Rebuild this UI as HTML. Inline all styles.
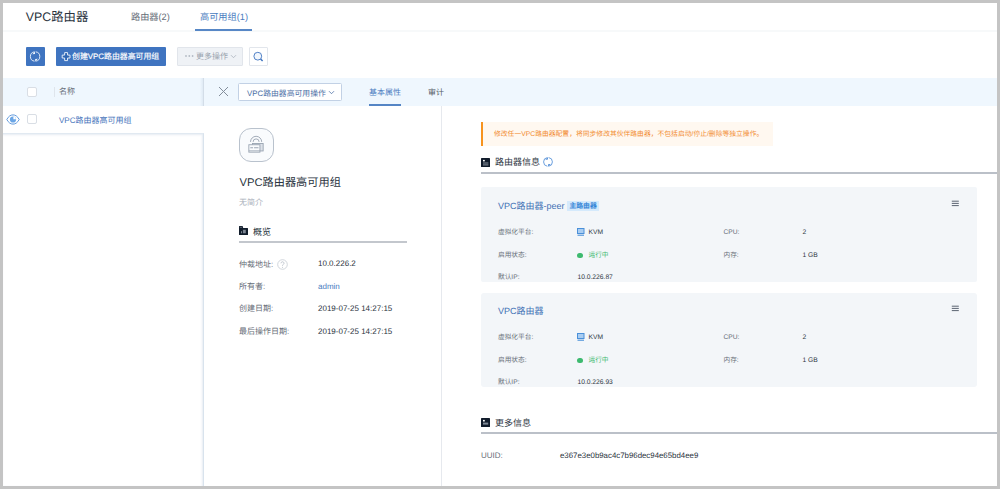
<!DOCTYPE html>
<html lang="zh-CN"><head><meta charset="utf-8">
<style>
*{box-sizing:border-box;margin:0;padding:0}
html,body{width:1000px;height:489px;overflow:hidden;background:#c4c4c4;font-family:"Liberation Sans",sans-serif;}
.pg{position:absolute;left:3px;top:3px;width:994px;height:483px;background:#fff;overflow:hidden}
.a{position:absolute;white-space:nowrap;line-height:1;text-rendering:geometricPrecision}
</style></head><body>
<div class="pg"></div>

<!-- header -->
<div class="a" style="left:25.7px;top:10.8px;font-size:12.4px;color:#2b3440">VPC路由器</div>
<div class="a" style="left:131px;top:12.5px;font-size:9.2px;color:#666d77">路由器(2)</div>
<div class="a" style="left:200px;top:12.5px;font-size:9.2px;color:#4a7cc0">高可用组(1)</div>
<div class="a" style="left:3px;top:30px;width:994px;height:2px;background:#f7f9fa"></div>
<div class="a" style="left:195.3px;top:29.2px;width:56.5px;height:1.8px;background:#5787c6"></div>

<!-- toolbar -->
<div class="a" style="left:26px;top:47px;width:19px;height:19px;background:#3f74c0;border-radius:1px"></div>
<svg class="a" style="left:26px;top:47px" width="19" height="19" viewBox="0 0 19 19"><g transform="translate(4.1 4.8)"><path d="M4.4 9.36A4.7 4.7 0 0 1 4.4 0.04M5.6 0.04A4.7 4.7 0 0 1 5.6 9.36" fill="none" stroke="#f2f6fc" stroke-width="0.9"/><path d="M2.2 2.4L4.9 -0.2 4.9 2.2zM7.8 7L5.1 9.6 5.1 7.2z" fill="#f2f6fc"/></g></svg>
<div class="a" style="left:56px;top:47px;width:110px;height:19px;background:#3f74c0;border-radius:1px"></div>
<svg class="a" style="left:61px;top:52px" width="10" height="10" viewBox="0 0 10 10"><path d="M3.65 0.6H6.55V3.1H9V6H6.55V8.6H3.65V6H1.2V3.1H3.65Z" fill="#2f66b3" stroke="#f4f8fd" stroke-width="0.9" stroke-linejoin="miter"/></svg>
<div class="a" style="left:72px;top:52.8px;font-size:7.9px;color:#fff;-webkit-text-stroke:0.15px #fff">创建VPC路由器高可用组</div>
<div class="a" style="left:177px;top:47px;width:66px;height:19px;background:#eff2f6;border:1px solid #e1e5eb;border-radius:1px"></div>
<svg class="a" style="left:184px;top:54px" width="12" height="4" viewBox="0 0 12 4"><circle cx="2" cy="2" r="0.9" fill="#b4bbc5"/><circle cx="5.3" cy="2" r="0.9" fill="#b4bbc5"/><circle cx="8.6" cy="2" r="0.9" fill="#b4bbc5"/></svg>
<div class="a" style="left:196px;top:53.2px;font-size:8px;color:#9aa3ae">更多操作</div>
<svg class="a" style="left:230px;top:54px" width="7" height="5" viewBox="0 0 7 5"><path d="M1 1.2l2.5 2.5L6 1.2" fill="none" stroke="#a9b1bc" stroke-width="0.8"/></svg>
<div class="a" style="left:249px;top:47px;width:19px;height:19px;background:#fff;border:1px solid #e2e6ec;border-radius:1px"></div>
<svg class="a" style="left:249px;top:47px" width="19" height="19" viewBox="0 0 19 19"><circle cx="8.8" cy="9.2" r="3.9" fill="#f2f7fd" stroke="#3f74c0" stroke-width="0.9"/><path d="M11.6 11.9l2 2.1" stroke="#3f74c0" stroke-width="1.5"/></svg>

<!-- table header -->
<div class="a" style="left:3px;top:78px;width:994px;height:28px;background:#eff7fe"></div>
<div class="a" style="left:27px;top:87px;width:10.2px;height:10.2px;background:#fff;border:1px solid #d9dee5;border-radius:2px"></div>
<div class="a" style="left:53.5px;top:87px;width:1px;height:10px;background:#dfe5ec"></div>
<div class="a" style="left:59px;top:88px;font-size:8px;color:#666d77">名称</div>
<div class="a" style="left:200px;top:78px;width:4px;height:28px;background:linear-gradient(to right,rgba(200,215,230,0),rgba(200,215,230,.4) 75%,#d3dde8 75%)"></div>

<!-- row 1 -->
<svg class="a" style="left:5.5px;top:113.5px" width="14" height="11" viewBox="0 0 14 11"><path d="M0.8 5.5C2.6 2.2 4.6 0.9 7 0.9S11.4 2.2 13.2 5.5C11.4 8.8 9.4 10.1 7 10.1S2.6 8.8 0.8 5.5z" fill="#fff" stroke="#5a95db" stroke-width="0.95"/><circle cx="7" cy="5.5" r="3.1" fill="#6ba6e6"/><path d="M7.4 2.5v2.7h2.7A3.1 3.1 0 0 0 7.4 2.5z" fill="#fff"/></svg>
<div class="a" style="left:27.1px;top:114.2px;width:10.2px;height:10.2px;background:#fff;border:1px solid #d9dee5;border-radius:2px"></div>
<div class="a" style="left:59px;top:116.5px;font-size:8px;color:#4574bb">VPC路由器高可用组</div>
<div class="a" style="left:3px;top:133px;width:201px;height:353px;border-top:1px solid #e1e9f1;border-right:1px solid #d9e3ed;box-shadow:inset -1px 1px 2px rgba(205,218,232,.5)"></div>

<!-- detail header -->
<svg class="a" style="left:218px;top:86px" width="11" height="11" viewBox="0 0 11 11"><path d="M1 1l9 9M10 1l-9 9" stroke="#838d9a" stroke-width="1"/></svg>
<div class="a" style="left:238px;top:83px;width:104px;height:18px;background:#fff;border:1px solid #c2d1e5;border-radius:1.5px"></div>
<div class="a" style="left:247px;top:89.9px;font-size:7.85px;color:#4a6ea5">VPC路由器高可用操作</div>
<svg class="a" style="left:328px;top:90px" width="7" height="5" viewBox="0 0 7 5"><path d="M1 1.2l2.5 2.5L6 1.2" fill="none" stroke="#4a6ea5" stroke-width="0.8"/></svg>
<div class="a" style="left:369px;top:88.5px;font-size:8px;color:#4a7cc0">基本属性</div>
<div class="a" style="left:369px;top:104px;width:31.5px;height:2px;background:#5585c5"></div>
<div class="a" style="left:428px;top:88.5px;font-size:8px;color:#555c66">审计</div>
<div class="a" style="left:441px;top:106px;width:1px;height:380px;background:#e6e9ee"></div>

<!-- middle column -->
<div class="a" style="left:239px;top:128px;width:35px;height:34px;background:#f9fbfd;border:1px solid #b9c2cd;border-radius:12px"></div>
<svg class="a" style="left:239px;top:128px" width="35" height="34" viewBox="0 0 35 34"><path d="M11.5 13.9A5.6 5.6 0 0 1 22.7 13.9M14.1 13.9A3 3 0 0 1 20.1 13.9" fill="none" stroke="#98a3b1" stroke-width="0.9"/><rect x="13.45" y="15.45" width="10.7" height="7.5" fill="#dde2e9" stroke="#98a3b1" stroke-width="0.9"/><rect x="9.85" y="16.75" width="11.1" height="7.4" fill="#f9fbfd" stroke="#98a3b1" stroke-width="0.9"/><path d="M11.7 19.7h1.9M15.5 19.7h3.6" stroke="#9aa5b3" stroke-width="1.1" stroke-linecap="round"/><path d="M9.85 22.8h11.1" stroke="#98a3b1" stroke-width="0.8"/></svg>
<div class="a" style="left:239.5px;top:177.8px;font-size:11.2px;color:#2b3440">VPC路由器高可用组</div>
<div class="a" style="left:239px;top:198.8px;font-size:8px;color:#a9b0ba">无简介</div>
<svg class="a" style="left:239px;top:226px" width="9" height="9" viewBox="0 0 9 9"><path d="M0 0.5Q0 0 0.5 0H3.6L4.2 2H8.5Q9 2 9 2.5V8.5Q9 9 8.5 9H0.5Q0 9 0 8.5z" fill="#111c2b"/><path d="M0.8 0.8H3.2V1.8H0.8z" fill="#5d6673"/><path d="M2 5.2h1v2H2zM3.9 3.8h2.9v3.4H3.9z" fill="#7d8693"/></svg>
<div class="a" style="left:253px;top:227.5px;font-size:9px;color:#2b3440">概览</div>
<div class="a" style="left:239px;top:241px;width:168px;height:2px;background:#c3c7cd"></div>

<div class="a" style="left:239px;top:260.5px;font-size:8px;color:#666d77">仲裁地址:</div>
<svg class="a" style="left:277px;top:258.7px" width="11" height="11" viewBox="0 0 11 11"><circle cx="5.5" cy="5.5" r="4.8" fill="#fff" stroke="#c5cbd3" stroke-width="0.8"/><path d="M4 4.3a1.5 1.5 0 1 1 2.2 1.3c-.6.3-.7.6-.7 1.2" fill="none" stroke="#b5bcc6" stroke-width="0.8"/><circle cx="5.5" cy="8.3" r="0.5" fill="#b5bcc6"/></svg>
<div class="a" style="left:318px;top:260.4px;font-size:8px;color:#2b3440">10.0.226.2</div>
<div class="a" style="left:239px;top:282.7px;font-size:8px;color:#666d77">所有者:</div>
<div class="a" style="left:318px;top:282.6px;font-size:8px;color:#4a7cc0">admin</div>
<div class="a" style="left:239px;top:305px;font-size:8px;color:#666d77">创建日期:</div>
<div class="a" style="left:318px;top:305.3px;font-size:8px;color:#2b3440">2019-07-25 14:27:15</div>
<div class="a" style="left:239px;top:327.5px;font-size:8px;color:#666d77">最后操作日期:</div>
<div class="a" style="left:318px;top:328px;font-size:8px;color:#2b3440">2019-07-25 14:27:15</div>

<!-- right column -->
<div class="a" style="left:481px;top:122px;width:292px;height:24px;background:#fff8f0;border-left:2px solid #f7931e"></div>
<div class="a" style="left:494px;top:132px;font-size:6.8px;color:#f28c30">修改任一VPC路由器配置，将同步修改其伙伴路由器，不包括启动/停止/删除等独立操作。</div>

<svg class="a" style="left:481px;top:157.5px" width="9" height="9" viewBox="0 0 9 9"><rect width="9" height="9" rx="0.6" fill="#111c2b"/><rect x="2" y="1.9" width="1.8" height="1.5" fill="#fff"/><path d="M2 5h5.4M2 6.9h5.4" stroke="#9aa2ad" stroke-width="0.9"/></svg>
<div class="a" style="left:495px;top:158.3px;font-size:9px;color:#2b3440">路由器信息</div>
<svg class="a" style="left:543px;top:156.7px" width="10" height="10" viewBox="0 -0.5 10 10"><path d="M4.4 8.76A4.4 4.4 0 0 1 4.4 0.04M5.6 0.04A4.4 4.4 0 0 1 5.6 8.76" fill="none" stroke="#5b95da" stroke-width="0.9"/><path d="M2.2 2.3L4.9 -0.2 4.9 2.1zM7.8 6.5L5.1 9 5.1 6.7z" fill="#4a88d4"/></svg>
<div class="a" style="left:481px;top:172.2px;width:516px;height:1.8px;background:#bbc0c8"></div>

<div class="a" style="left:481px;top:187.0px;width:496px;height:94.5px;background:#f3f6f9;border-radius:2px"></div>
<div class="a" style="left:498px;top:202.0px;font-size:9px;color:#4271b5">VPC路由器-peer</div>
<div class="a" style="left:567.3px;top:201px;width:31.5px;height:10px;background:#d5eafc"></div>
<div class="a" style="left:569.5px;top:204.3px;font-size:6.8px;color:#2a7fd6;-webkit-text-stroke:0.2px #2a7fd6">主路由器</div>
<svg class="a" style="left:951px;top:200.0px" width="8" height="7" viewBox="0 0 8 7"><path d="M0.8 1.2h7M0.8 3.4h7M0.8 5.6h7" stroke="#4b5563" stroke-width="0.9"/></svg>
<div class="a" style="left:498px;top:229.5px;font-size:6.7px;color:#666d77">虚拟化平台:</div>
<svg class="a" style="left:576.5px;top:227.5px" width="8" height="8" viewBox="0 0 8 8"><rect x="0.5" y="0.5" width="6.5" height="5" fill="#a9cdf2" stroke="#4a90d9" stroke-width="1"/><path d="M0.5 7.2h6.5" stroke="#4a90d9" stroke-width="1.1"/></svg>
<div class="a" style="left:588.5px;top:229.5px;font-size:6.7px;color:#2b3440">KVM</div>
<div class="a" style="left:723.5px;top:229.5px;font-size:6.7px;color:#666d77">CPU:</div>
<div class="a" style="left:802.5px;top:229.5px;font-size:6.7px;color:#2b3440">2</div>
<div class="a" style="left:498px;top:252.6px;font-size:6.7px;color:#666d77">启用状态:</div>
<div class="a" style="left:577px;top:252.8px;width:5.6px;height:5.6px;border-radius:50%;background:#3dba6f"></div>
<div class="a" style="left:588.5px;top:252.6px;font-size:6.7px;color:#3dba6f">运行中</div>
<div class="a" style="left:723.5px;top:252.6px;font-size:6.7px;color:#666d77">内存:</div>
<div class="a" style="left:802.5px;top:252.6px;font-size:6.7px;color:#2b3440">1 GB</div>
<div class="a" style="left:498px;top:274.5px;font-size:6.7px;color:#666d77">默认IP:</div>
<div class="a" style="left:577.5px;top:274.5px;font-size:6.7px;color:#2b3440">10.0.226.87</div>

<div class="a" style="left:481px;top:293.3px;width:495.8px;height:93.6px;background:#f3f6f9;border-radius:3px"></div>
<div class="a" style="left:498px;top:306.7px;font-size:9px;color:#4271b5">VPC路由器</div>
<svg class="a" style="left:951px;top:305.1px" width="8" height="7" viewBox="0 0 8 7"><path d="M0.8 1.2h7M0.8 3.4h7M0.8 5.6h7" stroke="#4b5563" stroke-width="0.9"/></svg>
<div class="a" style="left:498px;top:334.6px;font-size:6.7px;color:#666d77">虚拟化平台:</div>
<svg class="a" style="left:576.5px;top:332.6px" width="8" height="8" viewBox="0 0 8 8"><rect x="0.5" y="0.5" width="6.5" height="5" fill="#a9cdf2" stroke="#4a90d9" stroke-width="1"/><path d="M0.5 7.2h6.5" stroke="#4a90d9" stroke-width="1.1"/></svg>
<div class="a" style="left:588.5px;top:334.6px;font-size:6.7px;color:#2b3440">KVM</div>
<div class="a" style="left:723.5px;top:334.6px;font-size:6.7px;color:#666d77">CPU:</div>
<div class="a" style="left:802.5px;top:334.6px;font-size:6.7px;color:#2b3440">2</div>
<div class="a" style="left:498px;top:357.7px;font-size:6.7px;color:#666d77">启用状态:</div>
<div class="a" style="left:577px;top:357.9px;width:5.6px;height:5.6px;border-radius:50%;background:#3dba6f"></div>
<div class="a" style="left:588.5px;top:357.7px;font-size:6.7px;color:#3dba6f">运行中</div>
<div class="a" style="left:723.5px;top:357.7px;font-size:6.7px;color:#666d77">内存:</div>
<div class="a" style="left:802.5px;top:357.7px;font-size:6.7px;color:#2b3440">1 GB</div>
<div class="a" style="left:498px;top:379.6px;font-size:6.7px;color:#666d77">默认IP:</div>
<div class="a" style="left:577.5px;top:379.6px;font-size:6.7px;color:#2b3440">10.0.226.93</div>

<svg class="a" style="left:481px;top:418px" width="9" height="9" viewBox="0 0 9 9"><rect width="9" height="9" rx="0.6" fill="#111c2b"/><rect x="2" y="1.9" width="1.8" height="1.6" fill="#fff"/><rect x="2" y="4.6" width="5.2" height="2" fill="#7d8794"/></svg>
<div class="a" style="left:495px;top:419px;font-size:9px;color:#2b3440">更多信息</div>
<div class="a" style="left:481px;top:432.2px;width:516px;height:1.8px;background:#bbc0c8"></div>
<div class="a" style="left:481px;top:451.8px;font-size:8px;color:#666d77">UUID:</div>
<div class="a" style="left:560px;top:452px;font-size:7.85px;color:#2b3440">e367e3e0b9ac4c7b96dec94e65bd4ee9</div>

</body></html>
